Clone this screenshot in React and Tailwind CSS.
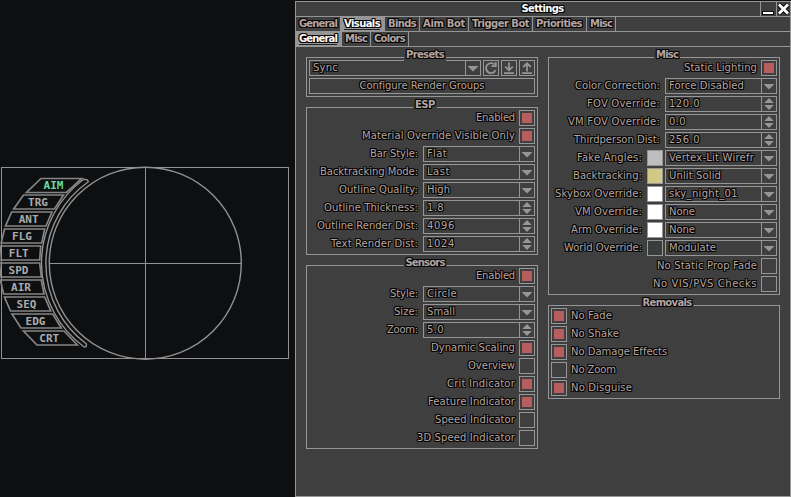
import { useLayoutEffect, useRef, useState } from "react";

const OUTLINE =
  "[text-shadow:1px_0_0_#080505,-1px_0_0_#080505,0_1px_0_#080505,0_-1px_0_#080505,1px_1px_0_#080505,-1px_-1px_0_#080505,1px_-1px_0_#080505,-1px_1px_0_#080505]";

// Outlined label whose tracking is adjusted so that it spans w pixels.
function Label({ w, bold, className = "", children }) {
  const ref = useRef(null);
  const [gap, setGap] = useState(0);
  useLayoutEffect(() => {
    const natural = ref.current.getBoundingClientRect().width;
    setGap((w - natural) / children.length);
  }, [w, children]);
  return (
    <span className={`flex shrink-0 whitespace-nowrap leading-[14px] ${OUTLINE} ${bold ? "text-[10px] font-bold" : "text-[10px]"} ${className}`} style={{ width: w }}>
      <span ref={ref} style={{ letterSpacing: gap ? `${gap}px` : undefined }}>
        {children}
      </span>
    </span>
  );
}

function Check({ on }) {
  return (
    <div className="size-4 shrink-0 border border-[#969696] p-[2px]">
      {on && <div className="size-full bg-[#b65e5e]" />}
    </div>
  );
}

function Swatch({ color }) {
  return <div className={`size-4 shrink-0 border border-[#969696] ${color}`} />;
}

function Field({ value, w, spin, className = "w-[112px]" }) {
  return (
    <div className={`flex h-4 shrink-0 border border-[#969696] ${className}`}>
      <div className="flex flex-1 items-center overflow-hidden pl-[3px]">
        <Label w={w}>{value}</Label>
      </div>
      <div className="flex w-[15px] items-center justify-center border-l border-[#969696]">
        {spin ? (
          <svg width="14" height="14" viewBox="0 0 14 14" fill="#969696">
            <path d="M7 1 L11.8 6 H2.2 Z M2.2 8 H11.8 L7 13 Z" />
          </svg>
        ) : (
          <svg width="14" height="14" viewBox="0 0 14 14" fill="#969696">
            <path d="M1.5 5 H12.5 L7 10.5 Z" />
          </svg>
        )}
      </div>
    </div>
  );
}

function CheckRow({ label, w, on }) {
  return (
    <div className="flex h-4 items-center justify-end gap-[4px]">
      <Label w={w}>{label}</Label>
      <Check on={on} />
    </div>
  );
}

function FieldRow({ label, w, value, vw, spin, swatch }) {
  return (
    <div className="flex h-4 items-center justify-end">
      <Label w={w} className="mr-[5px]">{label}</Label>
      {swatch && (
        <div className="mr-[2px]">
          <Swatch color={swatch} />
        </div>
      )}
      <Field value={value} w={vw} spin={spin} />
    </div>
  );
}

function Group({ title, w, children }) {
  return (
    <section className="relative flex w-[232px] flex-col gap-[2px] border border-[#969696] p-[2px]">
      <h2 className="absolute -top-[10px] left-[118px] -translate-x-1/2 bg-[#3f3f3f] px-[2px]">
        <Label w={w} bold>{title}</Label>
      </h2>
      {children}
    </section>
  );
}

function Tab({ label, w, cell, active }) {
  return (
    <div className={`flex h-[14px] items-center border-r border-[#969696] pl-[3px] ${cell} ${active ? "bg-[#969696] text-white" : ""}`}>
      <div className={active ? "border-b border-[#222] leading-none" : ""}>
        <div className={active ? "h-3 -mt-px" : ""}>
          <Label w={w} bold className={active ? "-mt-px" : ""}>{label}</Label>
        </div>
      </div>
    </div>
  );
}

const TAGS = [
  ["AIM", "41,178.5 81.7,178.5 66.5,192.5 26.5,192.5", 53.5, 188.8],
  ["TRG", "23.5,195 63.5,195 54.5,209 13.7,209", 38, 205.8],
  ["ANT", "11.7,212 52,212 46,226 5.5,226", 28.7, 222.8],
  ["FLG", "4.5,229 44.7,229 41.7,243 1.2,243", 22, 239.8],
  ["FLT", "0.5,246 40.7,246 39.7,260 -0.5,260", 18.8, 256.8],
  ["SPD", "-0.5,263 39.7,263 41.3,277 0.8,277", 18.5, 273.8],
  ["AIR", "0.5,280 41.3,280 44,294 3.5,294", 21, 290.8],
  ["SEQ", "4.5,297 44.7,297 50.7,311 10.5,311", 26.5, 307.8],
  ["EDG", "12,314 52.7,314 61.3,328 21,328", 35.5, 324.8],
  ["CRT", "23.5,331 64,331 77.3,345 37,345", 49.3, 341.8],
];

function Radar() {
  return (
    <svg className="block shrink-0" width="295" height="497" viewBox="0 0 295 497" fill="none" stroke="#929292">
      <rect x="1.5" y="167.5" width="287" height="191" />
      <path d="M145.5 167.5 V358.5 M49.5 263.5 H241.5" />
      <circle cx="145.3" cy="263.2" r="96" strokeWidth="1.4" />
      <path d="M83.7 179.3 A104 104 0 0 0 84.2 347 L86 346.7 L86.5 344 A100 100 0 0 1 88.3 181.8 L87.4 179.9 Z" strokeWidth="1.4" />
      {TAGS.map(([name, points, x, y], i) => (
        <g key={name}>
          <polygon points={points} strokeWidth="1.7" stroke="#858585" />
          <text
            x={x}
            y={y}
            textAnchor="middle"
            className="font-['DejaVu_Sans_Mono',monospace] text-[11px] font-bold"
            stroke="none"
            fill={i === 0 ? "#66df9e" : "#ababab"}
          >
            {name}
          </text>
        </g>
      ))}
    </svg>
  );
}

function IconButton({ children }) {
  return (
    <div className="flex size-4 shrink-0 border border-[#969696]">
      <svg width="14" height="14" viewBox="0 0 14 14" fill="none" stroke="#969696" strokeWidth="1.8">
        {children}
      </svg>
    </div>
  );
}

export default function App() {
  return (
    <div className="flex h-[497px] w-[791px] overflow-hidden bg-[#0e0f11] font-['DejaVu_Sans',sans-serif] text-[#b3a6a3]">
      <Radar />
      <main className="mt-px flex h-[496px] w-[496px] flex-col border border-[#969696] bg-[#3f3f3f]">
        <header className="flex h-[15px] border-b border-[#969696]">
          <div className="flex flex-1 items-center justify-center pl-[29px]">
            <Label w={42} bold className="text-white">Settings</Label>
          </div>
          <div className="w-4 border-l border-[#969696]">
            <svg width="15" height="14" viewBox="0 0 15 14">
              <path d="M1 9 H13 V13 H1 Z" fill="#111" />
              <path d="M2 10 H12 V12 H2 Z" fill="#fff" />
            </svg>
          </div>
          <div className="w-[14px] border-l border-[#969696]">
            <svg width="13" height="14" viewBox="0 0 13 14" fill="none">
              <path d="M2 2.5 L11 11.5 M11 2.5 L2 11.5" stroke="#111" strokeWidth="5" />
              <path d="M2 2.5 L11 11.5 M11 2.5 L2 11.5" stroke="#fff" strokeWidth="2.8" />
            </svg>
          </div>
        </header>
        <nav className="flex h-[15px] border-b border-[#969696]">
          <Tab label="General" w={38} cell="w-[45px]" />
          <Tab label="Visuals" w={36} cell="w-[44px]" active />
          <Tab label="Binds" w={28} cell="w-[35px]" />
          <Tab label="Aim Bot" w={42} cell="w-[49px]" />
          <Tab label="Trigger Bot" w={57} cell="w-[64px]" />
          <Tab label="Priorities" w={46} cell="w-[54px]" />
          <Tab label="Misc" w={22} cell="w-[29px]" />
        </nav>
        <nav className="flex h-[15px] border-b border-[#969696]">
          <Tab label="General" w={38} cell="w-[46px]" active />
          <Tab label="Misc" w={22} cell="w-[29px]" />
          <Tab label="Colors" w={31} cell="w-[38px]" />
        </nav>
        <div className="flex gap-[10px] pl-[10px] pt-[10px]">
          <div className="flex flex-col gap-[10px]">
            <Group title="Presets" w={38}>
              <div className="flex gap-[2px]">
                <Field value="Sync" w={25} className="w-[172px]" />
                <IconButton>
                  <path d="M11.6 9.2 A5 5 0 1 1 10.6 3.6" />
                  <path d="M11.8 1 V5.2 H7.6" />
                </IconButton>
                <IconButton>
                  <path d="M7 1.5 V9 M3.2 5.6 L7 9.2 L10.8 5.6 M2 12.2 H12" />
                </IconButton>
                <IconButton>
                  <path d="M7 10.5 V2.5 M3.2 6 L7 2.3 L10.8 6 M2 12.2 H12" />
                </IconButton>
              </div>
              <div className="flex h-4 items-center justify-center border border-[#969696]">
                <Label w={125}>Configure Render Groups</Label>
              </div>
            </Group>
            <Group title="ESP" w={20}>
              <CheckRow label="Enabled" w={39} on />
              <CheckRow label="Material Override Visible Only" w={153} on />
              <FieldRow label="Bar Style:" w={48} value="Flat" vw={20} />
              <FieldRow label="Backtracking Mode:" w={98} value="Last" vw={23} />
              <FieldRow label="Outline Quality:" w={79} value="High" vw={23} />
              <FieldRow label="Outline Thickness:" w={94} value="1.8" vw={17} spin />
              <FieldRow label="Outline Render Dist:" w={101} value="4096" vw={28} spin />
              <FieldRow label="Text Render Dist:" w={87} value="1024" vw={28} spin />
            </Group>
            <Group title="Sensors" w={39}>
              <CheckRow label="Enabled" w={39} on />
              <FieldRow label="Style:" w={28} value="Circle" vw={30} />
              <FieldRow label="Size:" w={24} value="Small" vw={28} />
              <FieldRow label="Zoom:" w={31} value="5.0" vw={17} spin />
              <CheckRow label="Dynamic Scaling" w={84} on />
              <CheckRow label="Overview" w={47} />
              <CheckRow label="Crit Indicator" w={68} on />
              <CheckRow label="Feature Indicator" w={87} on />
              <CheckRow label="Speed Indicator" w={80} />
              <CheckRow label="3D Speed Indicator" w={98} />
            </Group>
          </div>
          <div className="flex flex-col gap-[10px]">
            <Group title="Misc" w={22}>
              <CheckRow label="Static Lighting" w={73} on />
              <FieldRow label="Color Correction:" w={85} value="Force Disabled" vw={75} />
              <FieldRow label="FOV Override:" w={73} value="120.0" vw={31} spin />
              <FieldRow label="VM FOV Override:" w={92} value="0.0" vw={17} spin />
              <FieldRow label="Thirdperson Dist:" w={86} value="256.0" vw={31} spin />
              <FieldRow label="Fake Angles:" w={65} value="Vertex-Lit Wirefr" vw={85} swatch="bg-[#bebebe]" />
              <FieldRow label="Backtracking:" w={69} value="Unlit Solid" vw={52} swatch="bg-[#d3c886]" />
              <FieldRow label="Skybox Override:" w={87} value="sky_night_01" vw={69} swatch="bg-white" />
              <FieldRow label="VM Override:" w={67} value="None" vw={26} swatch="bg-white" />
              <FieldRow label="Arm Override:" w={71} value="None" vw={26} swatch="bg-white" />
              <FieldRow label="World Override:" w={78} value="Modulate" vw={47} swatch="bg-[#3a3d3d]" />
              <CheckRow label="No Static Prop Fade" w={100} />
              <CheckRow label="No VIS/PVS Checks" w={104} />
            </Group>
            <Group title="Removals" w={49}>
              {[
                ["No Fade", 41, true],
                ["No Shake", 48, true],
                ["No Damage Effects", 96, true],
                ["No Zoom", 45, false],
                ["No Disguise", 61, true],
              ].map(([label, w, on]) => (
                <div key={label} className="flex h-4 items-center gap-[4px]">
                  <Check on={on} />
                  <Label w={w}>{label}</Label>
                </div>
              ))}
            </Group>
          </div>
        </div>
      </main>
    </div>
  );
}
